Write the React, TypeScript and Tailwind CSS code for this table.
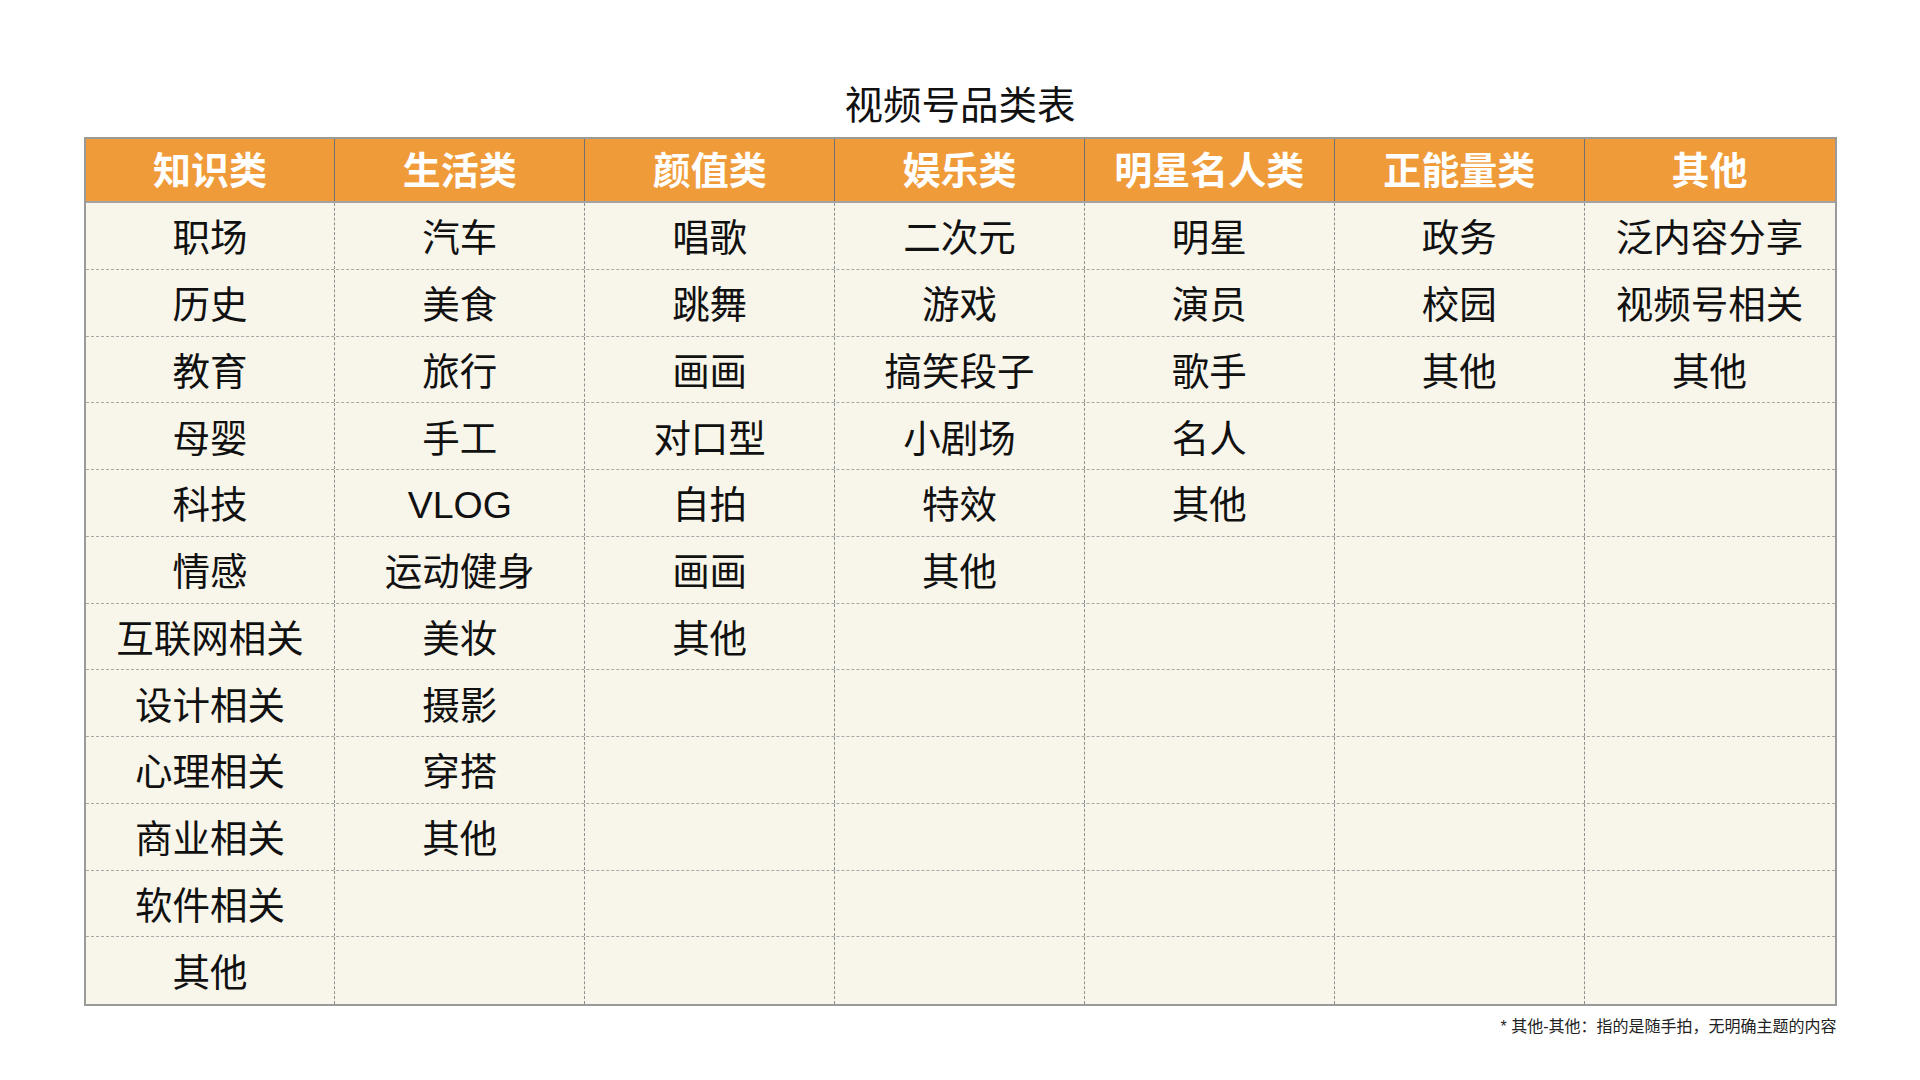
import React from "react";

const headers = ["知识类", "生活类", "颜值类", "娱乐类", "明星名人类", "正能量类", "其他"];
const columns: string[][] = [
  ["职场", "历史", "教育", "母婴", "科技", "情感", "互联网相关", "设计相关", "心理相关", "商业相关", "软件相关", "其他"],
  ["汽车", "美食", "旅行", "手工", "VLOG", "运动健身", "美妆", "摄影", "穿搭", "其他"],
  ["唱歌", "跳舞", "画画", "对口型", "自拍", "画画", "其他"],
  ["二次元", "游戏", "搞笑段子", "小剧场", "特效", "其他"],
  ["明星", "演员", "歌手", "名人", "其他"],
  ["政务", "校园", "其他"],
  ["泛内容分享", "视频号相关", "其他"],
];
const ROWS = 12;

export default function App() {
  const font = { fontFamily: '"Liberation Sans", "Noto Sans CJK SC", sans-serif' };
  return (
    <div className="w-[1920px] h-[1080px] bg-white" style={font}>
      <div className="pt-[84px] w-[1753px] mx-auto">
        <div className="h-[44px] leading-[44px] text-center text-[38.5px] text-[#111] mb-[9px]">视频号品类表</div>
        <div className="border-2 border-[#9a9a9a] bg-[#f8f6ea]">
          <div className="grid grid-cols-7 h-[64px] bg-[#f09b3a] border-b-2 border-[#a3a3a3]">
            {headers.map((h, i) => (
              <div
                key={h}
                className={`flex items-center justify-center pt-[3px] text-white font-bold text-[38px] ${i < 6 ? "border-r border-[#707070]" : ""}`}
              >
                {h}
              </div>
            ))}
          </div>
          {Array.from({ length: ROWS }).map((_, r) => (
            <div key={r} className={`grid grid-cols-7 h-[66.75px] ${r < ROWS - 1 ? "border-b border-dashed border-[#a8a8a8]" : ""}`}>
              {columns.map((col, c) => (
                <div
                  key={c}
                  className={`flex items-center justify-center pt-[5px] text-[37.5px] text-[#111] ${c < 6 ? "border-r border-dashed border-[#8f8f8f]" : ""}`}
                >
                  {col[r] ?? ""}
                </div>
              ))}
            </div>
          ))}
        </div>
        <div className="mt-[11px] h-[20px] leading-[20px] text-right text-[16px] text-[#222]">* 其他-其他：指的是随手拍，无明确主题的内容</div>
      </div>
    </div>
  );
}
